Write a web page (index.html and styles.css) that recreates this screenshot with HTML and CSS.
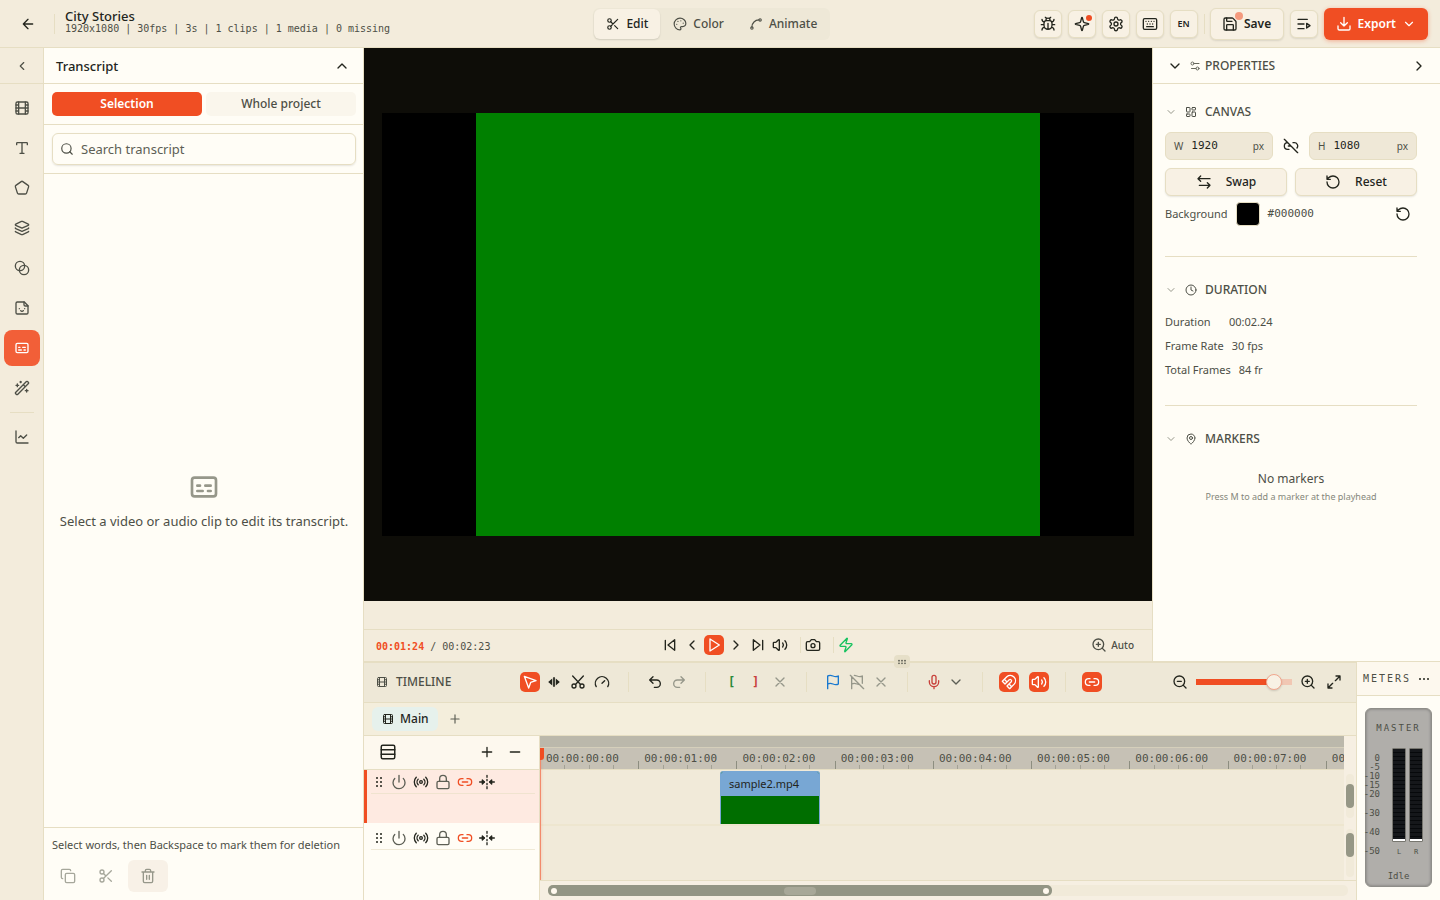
FILE: index.html
```html
<!DOCTYPE html>
<html lang="en">
<head>
<meta charset="utf-8">
<title>City Stories</title>
<link rel="stylesheet" href="styles.css">
</head>
<body>
<svg class="sprite" aria-hidden="true">
  <symbol id="i-back" viewBox="0 0 24 24"><path d="m12 19-7-7 7-7M19 12H5"/></symbol>
  <symbol id="i-left" viewBox="0 0 24 24"><path d="m15 18-6-6 6-6"/></symbol>
  <symbol id="i-right" viewBox="0 0 24 24"><path d="m9 18 6-6-6-6"/></symbol>
  <symbol id="i-up" viewBox="0 0 24 24"><path d="m18 15-6-6-6 6"/></symbol>
  <symbol id="i-down" viewBox="0 0 24 24"><path d="m6 9 6 6 6-6"/></symbol>
  <symbol id="i-film" viewBox="0 0 24 24"><rect width="18" height="18" x="3" y="3" rx="2"/><path d="M7 3v18M3 7.500h4M3 12h18M3 16.500h4M17 3v18M17 7.500h4M17 16.500h4"/></symbol>
  <symbol id="i-type" viewBox="0 0 24 24"><path d="M12 4v16M4 7V5a1 1 0 0 1 1-1h14a1 1 0 0 1 1 1v2M9 20h6"/></symbol>
  <symbol id="i-pentagon" viewBox="0 0 24 24"><path d="M10.830 2.380a2 2 0 0 1 2.340 0l8 5.740a2 2 0 0 1 .73 2.250l-3.040 9.260a2 2 0 0 1-1.900 1.370H7.040a2 2 0 0 1-1.900-1.370L2.100 10.370a2 2 0 0 1 .73-2.250z"/></symbol>
  <symbol id="i-layers" viewBox="0 0 24 24"><path d="M12.830 2.180a2 2 0 0 0-1.660 0L2.600 6.080a1 1 0 0 0 0 1.830l8.580 3.910a2 2 0 0 0 1.660 0l8.580-3.900a1 1 0 0 0 0-1.830z"/><path d="M2 12a1 1 0 0 0 .58.910l8.600 3.910a2 2 0 0 0 1.650 0l8.580-3.900A1 1 0 0 0 22 12"/><path d="M2 17a1 1 0 0 0 .58.910l8.600 3.910a2 2 0 0 0 1.650 0l8.580-3.900A1 1 0 0 0 22 17"/></symbol>
  <symbol id="i-blend" viewBox="0 0 24 24"><circle cx="9" cy="9" r="7"/><circle cx="15" cy="15" r="7"/></symbol>
  <symbol id="i-sticker" viewBox="0 0 24 24"><path d="M15.500 3H5a2 2 0 0 0-2 2v14a2 2 0 0 0 2 2h14a2 2 0 0 0 2-2V8.500z"/><path d="M15 3v4a2 2 0 0 0 2 2h4M8 13h.01M16 13h.01M10 16s.8 1 2 1c1.300 0 2-1 2-1"/></symbol>
  <symbol id="i-captions" viewBox="0 0 24 24"><rect width="18" height="14" x="3" y="5" rx="2"/><path d="M7 15h4M15 15h2M7 11h2M13 11h4"/></symbol>
  <symbol id="i-wand" viewBox="0 0 24 24"><path d="m21.640 3.640-1.280-1.280a1.210 1.210 0 0 0-1.720 0L2.360 18.640a1.210 1.210 0 0 0 0 1.720l1.280 1.280a1.200 1.200 0 0 0 1.720 0L21.640 5.360a1.200 1.200 0 0 0 0-1.720M14 7l3 3M5 6v4M19 14v4M10 2v2M7 8H3M21 16h-4M11 3H9"/></symbol>
  <symbol id="i-chart" viewBox="0 0 24 24"><path d="M3 3v16a2 2 0 0 0 2 2h16"/><path d="m19 9-5 5-4-4-3 3"/></symbol>
  <symbol id="i-scissors" viewBox="0 0 24 24"><circle cx="6" cy="6" r="3"/><path d="M8.120 8.120 12 12M20 4 8.120 15.880"/><circle cx="6" cy="18" r="3"/><path d="M14.800 14.800 20 20"/></symbol>
  <symbol id="i-cut" viewBox="0 0 24 24"><circle cx="6" cy="18" r="3"/><circle cx="18" cy="18" r="3"/><path d="M8.200 15.800 20 3M15.800 15.800 4 3"/></symbol>
  <symbol id="i-palette" viewBox="0 0 24 24"><path d="M12 2C6.500 2 2 6.500 2 12s4.500 10 10 10c.93 0 1.650-.75 1.650-1.690 0-.44-.18-.83-.44-1.120-.29-.29-.44-.65-.44-1.130a1.640 1.640 0 0 1 1.670-1.670h2c3.050 0 5.550-2.500 5.550-5.550C21.970 6.010 17.460 2 12 2z"/><path d="M13.500 6.500h.01M17.500 10.500h.01M6.500 12.500h.01M8.500 7.500h.01"/></symbol>
  <symbol id="i-spline" viewBox="0 0 24 24"><circle cx="19" cy="5" r="2"/><circle cx="5" cy="19" r="2"/><path d="M5 17A12 12 0 0 1 17 5"/></symbol>
  <symbol id="i-bug" viewBox="0 0 24 24"><path d="m8 2 1.880 1.880M14.120 3.880 16 2M9 7.130v-1a3 3 0 1 1 6 0v1M12 20c-3.300 0-6-2.700-6-6v-3a4 4 0 0 1 4-4h4a4 4 0 0 1 4 4v3c0 3.300-2.700 6-6 6M12 20v-9M6.530 9C4.600 8.800 3 7.100 3 5M6 13H2M3 21c0-2.100 1.700-3.900 3.800-4M21 5c0 2.100-1.600 3.800-3.500 4M22 13h-4M17.200 17c2.100.1 3.800 1.900 3.800 4"/></symbol>
  <symbol id="i-spark" viewBox="0 0 24 24"><path d="M9.940 15.500A2 2 0 0 0 8.500 14.060l-6.140-1.580a.5.500 0 0 1 0-.96L8.500 9.940A2 2 0 0 0 9.940 8.500l1.580-6.140a.5.500 0 0 1 .96 0L14.060 8.500A2 2 0 0 0 15.500 9.940l6.140 1.580a.5.500 0 0 1 0 .96L15.500 14.060a2 2 0 0 0-1.440 1.440l-1.580 6.140a.5.500 0 0 1-.96 0z"/></symbol>
  <symbol id="i-gear" viewBox="0 0 24 24"><path d="M9.700 4.100a2.300 2.300 0 0 1 4.600 0 2.300 2.300 0 0 0 3.300 1.900 2.300 2.300 0 0 1 2.300 4 2.300 2.300 0 0 0 0 3.900 2.300 2.300 0 0 1-2.300 4 2.300 2.300 0 0 0-3.300 1.900 2.300 2.300 0 0 1-4.600 0 2.300 2.300 0 0 0-3.300-1.900 2.300 2.300 0 0 1-2.300-4 2.300 2.300 0 0 0 0-3.900 2.300 2.300 0 0 1 2.300-4 2.300 2.300 0 0 0 3.300-1.900"/><circle cx="12" cy="12" r="3"/></symbol>
  <symbol id="i-keyboard" viewBox="0 0 24 24"><rect width="20" height="16" x="2" y="4" rx="2"/><path d="M6 8h.01M10 8h.01M14 8h.01M18 8h.01M8 12h.01M12 12h.01M16 12h.01M7 16h10"/></symbol>
  <symbol id="i-save" viewBox="0 0 24 24"><path d="M15.200 3a2 2 0 0 1 1.400.6l3.800 3.800a2 2 0 0 1 .6 1.400V19a2 2 0 0 1-2 2H5a2 2 0 0 1-2-2V5a2 2 0 0 1 2-2z"/><path d="M17 21v-7a1 1 0 0 0-1-1H8a1 1 0 0 0-1 1v7M7 3v4a1 1 0 0 0 1 1h7"/></symbol>
  <symbol id="i-queue" viewBox="0 0 24 24"><path d="M3 5h14M3 12h9M3 19h9"/><path d="m16 11 5 3.500-5 3.500z"/></symbol>
  <symbol id="i-download" viewBox="0 0 24 24"><path d="M12 2v13M21 15v4a2 2 0 0 1-2 2H5a2 2 0 0 1-2-2v-4M7 10l5 5 5-5"/></symbol>
  <symbol id="i-search" viewBox="0 0 24 24"><circle cx="11" cy="11" r="8"/><path d="m21 21-4.300-4.300"/></symbol>
  <symbol id="i-zin" viewBox="0 0 24 24"><circle cx="11" cy="11" r="8"/><path d="m21 21-4.300-4.300M11 8v6M8 11h6"/></symbol>
  <symbol id="i-zout" viewBox="0 0 24 24"><circle cx="11" cy="11" r="8"/><path d="m21 21-4.300-4.300M8 11h6"/></symbol>
  <symbol id="i-copy" viewBox="0 0 24 24"><rect width="14" height="14" x="8" y="8" rx="2"/><path d="M4 16c-1.100 0-2-.9-2-2V4c0-1.100.9-2 2-2h10c1.100 0 2 .9 2 2"/></symbol>
  <symbol id="i-trash" viewBox="0 0 24 24"><path d="M3 6h18M19 6v14a2 2 0 0 1-2 2H7a2 2 0 0 1-2-2V6M8 6V4a2 2 0 0 1 2-2h4a2 2 0 0 1 2 2v2M10 11v6M14 11v6"/></symbol>
  <symbol id="i-sliders" viewBox="0 0 24 24"><path d="M20 7h-9M14 17H5"/><circle cx="17" cy="17" r="3"/><circle cx="7" cy="7" r="3"/></symbol>
  <symbol id="i-layout" viewBox="0 0 24 24"><rect x="3" y="3" width="7" height="9" rx="1"/><rect x="14" y="3" width="7" height="5" rx="1"/><rect x="14" y="12" width="7" height="9" rx="1"/><rect x="3" y="16" width="7" height="5" rx="1"/></symbol>
  <symbol id="i-unlink" viewBox="0 0 24 24"><path d="M9 17H7A5 5 0 0 1 7 7M15 7h2a5 5 0 0 1 4 8M8 12h4M2 2l20 20"/></symbol>
  <symbol id="i-link" viewBox="0 0 24 24"><path d="M9 17H7A5 5 0 0 1 7 7h2M15 7h2a5 5 0 1 1 0 10h-2M8 12h8"/></symbol>
  <symbol id="i-swap" viewBox="0 0 24 24"><path d="M7 3 3 7l4 4M3 7h18M17 13l4 4-4 4M21 17H5"/></symbol>
  <symbol id="i-reset" viewBox="0 0 24 24"><path d="M3 12a9 9 0 1 0 9-9 9.750 9.750 0 0 0-6.740 2.740L3 8M3 3v5h5"/></symbol>
  <symbol id="i-clock" viewBox="0 0 24 24"><circle cx="12" cy="12" r="10"/><path d="M12 6v6l4 2"/></symbol>
  <symbol id="i-pin" viewBox="0 0 24 24"><path d="M20 10c0 5-5.500 10.200-7.400 11.800a1 1 0 0 1-1.200 0C9.500 20.200 4 15 4 10a8 8 0 0 1 16 0"/><circle cx="12" cy="10" r="3"/></symbol>
  <symbol id="i-start" viewBox="0 0 24 24"><path d="M19 20 9 12l10-8zM5 19V5"/></symbol>
  <symbol id="i-end" viewBox="0 0 24 24"><path d="m5 4 10 8-10 8zM19 5v14"/></symbol>
  <symbol id="i-play" viewBox="0 0 24 24"><path d="M6 3l14 9-14 9z"/></symbol>
  <symbol id="i-volume" viewBox="0 0 24 24"><path d="M11 4.700a.7.700 0 0 0-1.200-.5L6.400 7.600A1.400 1.400 0 0 1 5.400 8H3a1 1 0 0 0-1 1v6a1 1 0 0 0 1 1h2.400a1.400 1.400 0 0 1 1 .4l3.400 3.400a.7.700 0 0 0 1.200-.5zM16 9a5 5 0 0 1 0 6M19.400 18.400a9 9 0 0 0 0-12.800"/></symbol>
  <symbol id="i-camera" viewBox="0 0 24 24"><path d="M14.500 4h-5L7 7H4a2 2 0 0 0-2 2v9a2 2 0 0 0 2 2h16a2 2 0 0 0 2-2V9a2 2 0 0 0-2-2h-3z"/><circle cx="12" cy="13" r="3"/></symbol>
  <symbol id="i-bolt" viewBox="0 0 24 24"><path d="M4 14a1 1 0 0 1-.8-1.600l9.900-10.200a.5.500 0 0 1 .9.500l-2 6A1 1 0 0 0 13 10h7a1 1 0 0 1 .8 1.600l-9.900 10.200a.5.500 0 0 1-.9-.5l2-6A1 1 0 0 0 11 14z"/></symbol>
  <symbol id="i-pointer" viewBox="0 0 24 24"><path d="M3.500 3.500 21 10l-8 2.700L10 21z"/></symbol>
  <symbol id="i-trim" viewBox="0 0 24 24"><path d="M12 5v14" stroke-width="3"/><path fill="currentColor" stroke="none" d="M9 6v12l-7-6zM15 6v12l7-6z"/></symbol>
  <symbol id="i-gauge" viewBox="0 0 24 24"><path d="m12 14 4-4M3.340 19a10 10 0 1 1 17.320 0"/></symbol>
  <symbol id="i-undo" viewBox="0 0 24 24"><path d="M9 14 4 9l5-5M4 9h10.500a5.500 5.500 0 0 1 0 11H11"/></symbol>
  <symbol id="i-redo" viewBox="0 0 24 24"><path d="m15 14 5-5-5-5M20 9H9.500a5.500 5.500 0 0 0 0 11H13"/></symbol>
  <symbol id="i-x" viewBox="0 0 24 24"><path d="M18 6 6 18M6 6l12 12"/></symbol>
  <symbol id="i-flag" viewBox="0 0 24 24"><path d="M4 15s1-1 4-1 5 2 8 2 4-1 4-1V3s-1 1-4 1-5-2-8-2-4 1-4 1zM4 22v-7"/></symbol>
  <symbol id="i-flagoff" viewBox="0 0 24 24"><path d="M8 2c3 0 5 2 8 2s4-1 4-1v11M4 22V4M4 15s1-1 4-1 5 2 8 2M2 2l20 20"/></symbol>
  <symbol id="i-mic" viewBox="0 0 24 24"><path d="M12 2a3 3 0 0 0-3 3v7a3 3 0 0 0 6 0V5a3 3 0 0 0-3-3M19 10v2a7 7 0 0 1-14 0v-2M12 19v3"/></symbol>
  <symbol id="i-magnet" viewBox="0 0 24 24"><path d="m6 15-4-4 6.750-6.770a7.790 7.790 0 0 1 11 11L13 22l-4-4 6.390-6.360a2.140 2.140 0 0 0-3-3L6 15M5 8l4 4M12 15l4 4"/></symbol>
  <symbol id="i-expand" viewBox="0 0 24 24"><path d="M15 3h6v6M21 3l-7 7M3 21l7-7M9 21H3v-6"/></symbol>
  <symbol id="i-plus" viewBox="0 0 24 24"><path d="M5 12h14M12 5v14"/></symbol>
  <symbol id="i-minus" viewBox="0 0 24 24"><path d="M5 12h14"/></symbol>
  <symbol id="i-rows" viewBox="0 0 24 24"><rect width="18" height="18" x="3" y="3" rx="2"/><path d="M3 9h18M3 15h18"/></symbol>
  <symbol id="i-grip" viewBox="0 0 24 24"><path stroke-width="4" d="M8 4h.01M8 12h.01M8 20h.01M16 4h.01M16 12h.01M16 20h.01"/></symbol>
  <symbol id="i-griph" viewBox="0 0 24 24"><path stroke-width="5" d="M3 8h.01M12 8h.01M21 8h.01M3 16h.01M12 16h.01M21 16h.01"/></symbol>
  <symbol id="i-power" viewBox="0 0 24 24"><path d="M12 2v10M18.400 6.600a9 9 0 1 1-12.770.04"/></symbol>
  <symbol id="i-radio" viewBox="0 0 24 24"><path d="M4.900 19.100C1 15.200 1 8.800 4.900 4.900M7.800 16.200c-2.300-2.300-2.300-6.100 0-8.500M16.200 7.800c2.300 2.300 2.300 6.100 0 8.500M19.100 4.900C23 8.800 23 15.100 19.100 19"/><circle cx="12" cy="12" r="2"/></symbol>
  <symbol id="i-lock" viewBox="0 0 24 24"><rect width="18" height="11" x="3" y="11" rx="2"/><path d="M7 11V7a5 5 0 0 1 10 0v4"/></symbol>
  <symbol id="i-fold" viewBox="0 0 24 24"><path d="M12 2v3M12 8v2M12 14v2M12 19v3M1 12h7M23 12h-7"/><path fill="currentColor" d="m5 9 3 3-3 3zM19 9l-3 3 3 3z"/></symbol>
  <symbol id="i-dots" viewBox="0 0 24 24"><path stroke-width="4" d="M4 12h.01M12 12h.01M20 12h.01"/></symbol>
</svg>

<div class="app">
  <header class="topbar">
    <div class="topbar-left">
      <button class="icon-btn back" aria-label="Back"><svg class="s16"><use href="#i-back"/></svg></button>
      <span class="vsep tall"></span>
      <div class="project">
        <h1>City Stories</h1>
        <p>1920x1080 | 30fps | 3s | 1 clips | 1 media | 0 missing</p>
      </div>
    </div>
    <nav class="modes">
      <button class="mode active"><svg class="s14"><use href="#i-scissors"/></svg>Edit</button>
      <button class="mode"><svg class="s14"><use href="#i-palette"/></svg>Color</button>
      <button class="mode"><svg class="s14"><use href="#i-spline"/></svg>Animate</button>
    </nav>
    <div class="topbar-right">
      <button class="tool" aria-label="Report a bug"><svg class="s16"><use href="#i-bug"/></svg></button>
      <button class="tool" aria-label="Assistant"><svg class="s16"><use href="#i-spark"/></svg><span class="dot"></span></button>
      <button class="tool" aria-label="Settings"><svg class="s16"><use href="#i-gear"/></svg></button>
      <button class="tool" aria-label="Shortcuts"><svg class="s16"><use href="#i-keyboard"/></svg></button>
      <button class="tool lang">EN</button>
      <span class="vsep tall"></span>
      <button class="tool save"><svg class="s16"><use href="#i-save"/></svg>Save<span class="dot soft"></span></button>
      <button class="tool" aria-label="Render queue"><svg class="s16"><use href="#i-queue"/></svg></button>
      <button class="export"><svg class="s16"><use href="#i-download"/></svg>Export<svg class="s14"><use href="#i-down"/></svg></button>
    </div>
  </header>

  <aside class="rail">
    <button class="rail-toggle" aria-label="Collapse"><svg class="s14"><use href="#i-left"/></svg></button>
    <div class="rail-items">
      <button class="rail-btn" aria-label="Media"><svg class="s16"><use href="#i-film"/></svg></button>
      <button class="rail-btn" aria-label="Text"><svg class="s16"><use href="#i-type"/></svg></button>
      <button class="rail-btn" aria-label="Shapes"><svg class="s16"><use href="#i-pentagon"/></svg></button>
      <button class="rail-btn" aria-label="Layers"><svg class="s16"><use href="#i-layers"/></svg></button>
      <button class="rail-btn" aria-label="Transitions"><svg class="s16"><use href="#i-blend"/></svg></button>
      <button class="rail-btn" aria-label="Stickers"><svg class="s16"><use href="#i-sticker"/></svg></button>
      <button class="rail-btn active" aria-label="Transcript"><svg class="s16"><use href="#i-captions"/></svg></button>
      <button class="rail-btn" aria-label="AI tools"><svg class="s16"><use href="#i-wand"/></svg></button>
      <span class="rail-sep"></span>
      <button class="rail-btn" aria-label="Graphs"><svg class="s16"><use href="#i-chart"/></svg></button>
    </div>
  </aside>

  <section class="transcript">
    <div class="panel-head"><h2>Transcript</h2><button class="icon-btn" aria-label="Collapse panel"><svg class="s16"><use href="#i-up"/></svg></button></div>
    <div class="scope">
      <button class="scope-btn active">Selection</button>
      <button class="scope-btn">Whole project</button>
    </div>
    <div class="search-row">
      <label class="search"><svg class="s14"><use href="#i-search"/></svg><input type="text" placeholder="Search transcript" aria-label="Search transcript"></label>
    </div>
    <div class="empty"><svg class="s32"><use href="#i-captions"/></svg><p>Select a video or audio clip to edit its transcript.</p></div>
    <div class="transcript-foot">
      <p>Select words, then Backspace to mark them for deletion</p>
      <div class="foot-btns">
        <button class="foot-btn" aria-label="Copy"><svg class="s16"><use href="#i-copy"/></svg></button>
        <button class="foot-btn" aria-label="Cut"><svg class="s16"><use href="#i-scissors"/></svg></button>
        <button class="foot-btn wide" aria-label="Delete"><svg class="s16"><use href="#i-trash"/></svg></button>
      </div>
    </div>
  </section>

  <main class="work">
    <div class="upper">
      <section class="viewer">
        <div class="stage-wrap"><div class="stage"><div class="frame"></div></div></div>
        <div class="strip"></div>
        <div class="transport">
          <p class="time"><b>00:01:24</b> / 00:02:23</p>
          <div class="transport-btns">
            <button class="icon-btn" aria-label="Go to start"><svg class="s16"><use href="#i-start"/></svg></button>
            <button class="icon-btn" aria-label="Previous frame"><svg class="s16"><use href="#i-left"/></svg></button>
            <button class="icon-btn on" aria-label="Play"><svg class="s16"><use href="#i-play"/></svg></button>
            <button class="icon-btn" aria-label="Next frame"><svg class="s16"><use href="#i-right"/></svg></button>
            <button class="icon-btn" aria-label="Go to end"><svg class="s16"><use href="#i-end"/></svg></button>
            <button class="icon-btn" aria-label="Volume"><svg class="s16"><use href="#i-volume"/></svg></button>
            <span class="vsep"></span>
            <button class="icon-btn" aria-label="Snapshot"><svg class="s16"><use href="#i-camera"/></svg></button>
            <span class="vsep"></span>
            <button class="icon-btn green" aria-label="Fast preview"><svg class="s16"><use href="#i-bolt"/></svg></button>
          </div>
          <button class="zoom-auto"><svg class="s16"><use href="#i-zin"/></svg>Auto</button>
        </div>
      </section>

      <aside class="props">
        <div class="panel-head props-head">
          <button class="icon-btn" aria-label="Collapse properties"><svg class="s16"><use href="#i-down"/></svg></button>
          <svg class="s12 muted"><use href="#i-sliders"/></svg>
          <h2>PROPERTIES</h2>
          <button class="icon-btn push" aria-label="Hide properties"><svg class="s16"><use href="#i-right"/></svg></button>
        </div>
        <div class="props-body">
          <section class="group">
            <h3><svg class="s12 faint"><use href="#i-down"/></svg><svg class="s12"><use href="#i-layout"/></svg>CANVAS</h3>
            <div class="size-row">
              <label class="field"><span>W</span><input type="text" value="1920"><em>px</em></label>
              <button class="icon-btn" aria-label="Unlink ratio"><svg class="s16"><use href="#i-unlink"/></svg></button>
              <label class="field"><span>H</span><input type="text" value="1080"><em>px</em></label>
            </div>
            <div class="pair">
              <button class="tool action"><svg class="s16"><use href="#i-swap"/></svg>Swap</button>
              <button class="tool action"><svg class="s16"><use href="#i-reset"/></svg>Reset</button>
            </div>
            <div class="bg-row">
              <span>Background</span>
              <button class="swatch" aria-label="Background colour"></button>
              <code>#000000</code>
              <button class="icon-btn push" aria-label="Reset background"><svg class="s16"><use href="#i-reset"/></svg></button>
            </div>
          </section>
          <section class="group">
            <h3><svg class="s12 faint"><use href="#i-down"/></svg><svg class="s12"><use href="#i-clock"/></svg>DURATION</h3>
            <dl>
              <div><dt class="dur">Duration</dt><dd>00:02.24</dd></div>
              <div><dt>Frame Rate</dt><dd>30 fps</dd></div>
              <div><dt>Total Frames</dt><dd>84 fr</dd></div>
            </dl>
          </section>
          <section class="group">
            <h3><svg class="s12 faint"><use href="#i-down"/></svg><svg class="s12"><use href="#i-pin"/></svg>MARKERS</h3>
            <div class="no-markers"><p>No markers</p><small>Press M to add a marker at the playhead</small></div>
          </section>
        </div>
      </aside>
    </div>

    <div class="lower">
      <span class="resize"><svg class="s8"><use href="#i-griph"/></svg></span>
      <section class="timeline">
        <div class="tl-bar">
          <h2><svg class="s12"><use href="#i-film"/></svg>TIMELINE</h2>
          <div class="tl-tools">
            <button class="icon-btn on" aria-label="Select"><svg class="s16"><use href="#i-pointer"/></svg></button>
            <button class="icon-btn" aria-label="Trim"><svg class="s14"><use href="#i-trim"/></svg></button>
            <button class="icon-btn" aria-label="Razor"><svg class="s16"><use href="#i-cut"/></svg></button>
            <button class="icon-btn" aria-label="Speed"><svg class="s16"><use href="#i-gauge"/></svg></button>
            <span class="vsep"></span>
            <button class="icon-btn" aria-label="Undo"><svg class="s16"><use href="#i-undo"/></svg></button>
            <button class="icon-btn dim" aria-label="Redo"><svg class="s16"><use href="#i-redo"/></svg></button>
            <span class="vsep"></span>
            <button class="icon-btn mark-in" aria-label="Mark in">[</button>
            <button class="icon-btn mark-out" aria-label="Mark out">]</button>
            <button class="icon-btn dim" aria-label="Clear marks"><svg class="s16"><use href="#i-x"/></svg></button>
            <span class="vsep"></span>
            <button class="icon-btn blue" aria-label="Add marker"><svg class="s16"><use href="#i-flag"/></svg></button>
            <button class="icon-btn dim" aria-label="Remove marker"><svg class="s16"><use href="#i-flagoff"/></svg></button>
            <button class="icon-btn dim" aria-label="Clear markers"><svg class="s16"><use href="#i-x"/></svg></button>
            <span class="vsep"></span>
            <span class="split"><button class="icon-btn red" aria-label="Record"><svg class="s16"><use href="#i-mic"/></svg></button><button class="icon-btn muted" aria-label="Record options"><svg class="s16"><use href="#i-down"/></svg></button></span>
            <span class="vsep"></span>
            <span class="snaps"><button class="icon-btn on" aria-label="Snap"><svg class="s16"><use href="#i-magnet"/></svg></button><button class="icon-btn on" aria-label="Scrub audio"><svg class="s16"><use href="#i-volume"/></svg></button></span>
            <span class="vsep"></span>
            <button class="icon-btn on" aria-label="Link clips"><svg class="s16"><use href="#i-link"/></svg></button>
          </div>
          <div class="tl-zoom">
            <button class="icon-btn" aria-label="Zoom out"><svg class="s16"><use href="#i-zout"/></svg></button>
            <input type="range" min="0" max="100" value="88" aria-label="Timeline zoom">
            <button class="icon-btn" aria-label="Zoom in"><svg class="s16"><use href="#i-zin"/></svg></button>
            <button class="icon-btn" aria-label="Fit"><svg class="s16"><use href="#i-expand"/></svg></button>
          </div>
        </div>
        <div class="tl-tabs">
          <button class="tl-tab"><svg class="s12"><use href="#i-film"/></svg>Main</button>
          <button class="icon-btn muted" aria-label="Add sequence"><svg class="s14"><use href="#i-plus"/></svg></button>
        </div>
        <div class="tl-body">
          <div class="heads">
            <div class="heads-bar">
              <button class="icon-btn" aria-label="Track list"><svg class="s18"><use href="#i-rows"/></svg></button>
              <button class="icon-btn push" aria-label="Add track"><svg class="s16"><use href="#i-plus"/></svg></button>
              <button class="icon-btn" aria-label="Remove track"><svg class="s16"><use href="#i-minus"/></svg></button>
            </div>
            <div class="track-head selected">
              <div class="track-btns">
                <button class="icon-btn grip" aria-label="Move"><svg class="s12"><use href="#i-grip"/></svg></button>
                <button class="icon-btn muted" aria-label="Enable"><svg class="s16"><use href="#i-power"/></svg></button>
                <button class="icon-btn" aria-label="Solo"><svg class="s16"><use href="#i-radio"/></svg></button>
                <button class="icon-btn muted" aria-label="Lock"><svg class="s16"><use href="#i-lock"/></svg></button>
                <button class="icon-btn orange" aria-label="Link"><svg class="s16"><use href="#i-link"/></svg></button>
                <button class="icon-btn" aria-label="Ripple"><svg class="s16"><use href="#i-fold"/></svg></button>
              </div>
            </div>
            <div class="track-head">
              <div class="track-btns">
                <button class="icon-btn grip" aria-label="Move"><svg class="s12"><use href="#i-grip"/></svg></button>
                <button class="icon-btn muted" aria-label="Enable"><svg class="s16"><use href="#i-power"/></svg></button>
                <button class="icon-btn" aria-label="Solo"><svg class="s16"><use href="#i-radio"/></svg></button>
                <button class="icon-btn muted" aria-label="Lock"><svg class="s16"><use href="#i-lock"/></svg></button>
                <button class="icon-btn orange" aria-label="Link"><svg class="s16"><use href="#i-link"/></svg></button>
                <button class="icon-btn" aria-label="Ripple"><svg class="s16"><use href="#i-fold"/></svg></button>
              </div>
            </div>
          </div>
          <div class="lanes">
            <div class="lanes-row">
              <div class="lanes-main">
                <div class="cache"></div>
                <div class="ruler">
                  <div class="ticks">
                    <span>00:00:00:00</span><span>00:00:01:00</span><span>00:00:02:00</span><span>00:00:03:00</span><span>00:00:04:00</span><span>00:00:05:00</span><span>00:00:06:00</span><span>00:00:07:00</span><span>00:00:08:00</span>
                  </div>
                </div>
                <div class="lane"><div class="clip"><span>sample2.mp4</span></div></div>
                <div class="lane last"></div>
                <div class="playhead"></div>
              </div>
              <div class="vscroll"><div class="vtrack"><span></span></div><div class="vtrack"><span></span></div></div>
            </div>
            <div class="hscroll"><div class="htrack"><div class="hthumb"><i></i><b></b><i></i></div></div></div>
          </div>
        </div>
      </section>

      <aside class="meters">
        <div class="meters-head"><h2>METERS</h2><button class="icon-btn" aria-label="Meter options"><svg class="s12"><use href="#i-dots"/></svg></button></div>
        <div class="unit">
          <h3>MASTER</h3>
          <div class="unit-body">
            <ul class="scale"><li>0</li><li>-5</li><li>-10</li><li>-15</li><li>-20</li><li class="gap">-30</li><li class="gap">-40</li><li class="gap">-50</li></ul>
            <div class="bar"><i></i><span>L</span></div>
            <div class="bar"><i></i><span>R</span></div>
          </div>
          <p>Idle</p>
        </div>
      </aside>
    </div>
  </main>
</div>
</body>
</html>
```
FILE: styles.css
```css
:root {
  --cream: #f3ecdc;
  --paper: #fffdf6;
  --bar: #eee8d7;
  --line: #e6dec3;
  --ink: #23251d;
  --mid: #4d4f46;
  --accent: #f04e23;
  --mono: "DejaVu Sans Mono", "Liberation Mono", monospace;
}
* { box-sizing: border-box; margin: 0; padding: 0; }
body { font: 12px/16px "Noto Sans", "Open Sans", sans-serif; color: var(--mid); background: var(--cream); }
button, input { font: inherit; color: inherit; background: none; border: 0; }
h1, h2, h3 { font-weight: 500; }
.sprite { position: absolute; width: 0; height: 0; }
svg { fill: none; stroke: currentColor; stroke-width: 2; stroke-linecap: round; stroke-linejoin: round; flex: none; display: block; }
.s8 { width: 8px; height: 8px; }
.s12 { width: 12px; height: 12px; }
.s14 { width: 14px; height: 14px; }
.s16 { width: 16px; height: 16px; }
.s18 { width: 18px; height: 18px; }
.s32 { width: 32px; height: 32px; }
.muted { color: #66685d; }
.faint { color: #96978a; }
.icon-btn { width: 20px; height: 20px; flex: none; display: flex; align-items: center; justify-content: center; color: var(--ink); border-radius: 5px; }
.icon-btn.on { background: var(--accent); color: #fff; }
.icon-btn.dim { color: #96978a; }
.icon-btn.muted { color: #5d5f55; }
.icon-btn.green { color: #16c25f; }
.icon-btn.blue { color: #1878cf; }
.icon-btn.red { color: #c8413b; }
.icon-btn.orange { color: var(--accent); }
.push { margin-left: auto; }
.vsep { width: 1px; height: 16px; background: var(--line); flex: none; }
.vsep.tall { height: 20px; }

.app { display: grid; grid-template: 48px minmax(0, 1fr) / 44px 320px minmax(0, 1fr); height: 100vh; }

/* Top bar */
.topbar { grid-column: 1 / -1; display: flex; align-items: center; justify-content: space-between; padding: 0 12px; border-bottom: 1px solid var(--line); }
.topbar-left { display: flex; align-items: center; gap: 10px; }
.back { width: 32px; height: 32px; }
.project { padding-bottom: 4px; }
.project h1 { font-size: 13px; line-height: 14px; color: var(--ink); }
.project p { font: 10px/11px var(--mono); }
.modes { display: flex; gap: 1px; padding: 1px; border-radius: 6px; background: var(--bar); }
.mode { display: flex; align-items: center; gap: 6px; height: 30px; padding: 0 12px; border-radius: 6px; font-weight: 500; }
.mode.active { color: var(--ink); background: #f8f1e4; box-shadow: 0 1px 2px #0000001f; }
.topbar-right { display: flex; align-items: center; justify-content: flex-end; gap: 6px; }
.topbar-right .vsep { margin: 0 -1px 0 0; }
.tool { position: relative; width: 28px; height: 28px; display: flex; align-items: center; justify-content: center; border: 1px solid var(--line); border-radius: 6px; background: #f8f1e4; color: var(--ink); font-weight: 600; box-shadow: 0 1px 2px #0000001a; }
.tool.lang { font-size: 9px; }
.tool.save { width: 74px; height: 32px; gap: 6px; }
.dot { position: absolute; top: 4px; right: 3px; width: 6px; height: 6px; border-radius: 50%; background: var(--accent); }
.dot.soft { top: 3px; left: 24px; width: 8px; height: 8px; background: #f49a7e; }
.export { display: flex; align-items: center; gap: 6px; height: 32px; padding: 0 12px; border-radius: 6px; background: var(--accent); color: #fff; font-weight: 600; box-shadow: 0 1px 4px #f04e2366; }

/* Tool rail */
.rail { border-right: 1px solid var(--line); }
.rail-toggle { width: 100%; height: 36px; display: flex; align-items: center; justify-content: center; border-bottom: 1px solid var(--line); }
.rail-items { display: flex; flex-direction: column; align-items: center; gap: 4px; padding-top: 6px; }
.rail-btn { width: 36px; height: 36px; display: flex; align-items: center; justify-content: center; border-radius: 8px; }
.rail-btn.active { background: #f25f38; color: #fff; }
.rail-sep { width: 24px; height: 1px; margin: 2px 0; background: var(--line); }

/* Transcript panel */
.transcript { display: flex; flex-direction: column; background: var(--paper); box-shadow: inset -1px 0 var(--line); }
.panel-head { display: flex; align-items: center; height: 36px; padding: 0 12px; border-bottom: 1px solid var(--line); flex: none; }
.transcript .panel-head { justify-content: space-between; }
.transcript h2 { font-size: 13px; color: var(--ink); }
.scope { display: grid; grid-template-columns: 1fr 1fr; gap: 4px; padding: 8px; border-bottom: 1px solid var(--line); }
.scope-btn { height: 24px; border-radius: 5px; background: #faf6ec; font-weight: 500; }
.scope-btn.active { background: var(--accent); color: #fff; font-weight: 600; }
.search-row { padding: 8px; border-bottom: 1px solid var(--line); }
.search { display: flex; align-items: center; gap: 7px; height: 32px; padding: 0 7px; border: 1px solid var(--line); border-radius: 6px; box-shadow: 0 1px 2px #0000001a; }
.search input { flex: 1; min-width: 0; font-size: 13px; outline: 0; }
.search input::placeholder { color: #5d5f55; opacity: 1; }
.empty { flex: 1; display: flex; flex-direction: column; align-items: center; justify-content: center; gap: 8px; font-size: 13px; line-height: 20px; white-space: nowrap; }
.empty svg { color: #96978a; }
.transcript-foot { display: flex; flex-direction: column; gap: 7px; padding: 9px 8px 8px; border-top: 1px solid var(--line); font-size: 11px; white-space: nowrap; }
.foot-btns { display: flex; gap: 6px; }
.foot-btn { width: 32px; height: 32px; display: flex; align-items: center; justify-content: center; border-radius: 6px; color: #a6a79b; }
.foot-btn.wide { width: 40px; background: #f8f1e7; color: #96978a; }

/* Viewer */
.work { display: flex; flex-direction: column; min-width: 0; }
.upper { flex: 1; min-height: 0; display: grid; grid-template-columns: minmax(0, 1fr) 288px; }
.viewer { display: flex; flex-direction: column; min-height: 0; }
.stage-wrap { flex: 1; min-height: 0; display: flex; align-items: center; justify-content: center; padding: 0 18px; background: #0e0d08; }
.stage { width: 100%; aspect-ratio: 16 / 9; display: flex; justify-content: center; background: #000; }
.frame { height: 100%; aspect-ratio: 4 / 3; background: #008000; }
.strip { height: 28px; flex: none; }
.transport { flex: none; height: 32px; display: grid; grid-template-columns: 1fr auto 1fr; align-items: center; padding: 0 12px 1px; border-top: 1px solid var(--line); }
.time { font: 10px/16px var(--mono); padding-top: 4px; }
.time b { color: var(--accent); }
.transport-btns { display: flex; align-items: center; gap: 2px; }
.transport-btns .vsep { margin-left: 8px; }
.zoom-auto { justify-self: end; display: flex; align-items: center; gap: 4px; padding-right: 6px; font-size: 10px; font-weight: 500; }

/* Properties */
.props { background: var(--paper); border-left: 1px solid var(--line); }
.props-head { gap: 4px; padding-right: 11px; }
.props-head h2 { font-size: 12px; }
.props-body { padding: 0 23px 0 12px; }
.group { padding-top: 20px; }
.group + .group { border-top: 1px solid var(--line); padding-top: 25px; }
.group h3 { display: flex; align-items: center; gap: 8px; height: 16px; font-size: 12px; }
.size-row { display: grid; grid-template-columns: 1fr 20px 1fr; gap: 8px; align-items: center; margin-top: 12px; }
.field { display: flex; align-items: center; gap: 8px; height: 28px; padding: 0 8px; border: 1px solid var(--line); border-radius: 6px; background: #efe8d7; font-size: 10px; }
.field input { flex: 1; width: 0; font: 11px/16px var(--mono); color: var(--ink); }
.field em { font-style: normal; }
.pair { display: grid; grid-template-columns: 1fr 1fr; gap: 8px; margin-top: 8px; }
.action { width: auto; gap: 14px; font-weight: 500; }
.bg-row { display: flex; align-items: center; gap: 8px; height: 24px; margin: 6px 0 30px; padding-right: 4px; font-size: 11px; }
.swatch { width: 24px; height: 24px; border: 1px solid var(--line); border-radius: 4px; background: #000; }
.bg-row code { font: 11px/16px var(--mono); }
.group dl { margin: 12px 0 23px; font-size: 11px; }
.group dl div { display: flex; gap: 8px; height: 24px; line-height: 24px; }
.dur { min-width: 56px; }
.no-markers { display: flex; flex-direction: column; align-items: center; margin-top: 24px; }
.no-markers small { margin-top: 2px; font-size: 9px; color: #85877b; }

/* Timeline */
.lower { position: relative; flex: none; height: 239px; display: grid; grid-template-columns: minmax(0, 1fr) 84px; border-top: 1px solid var(--line); }
.resize { position: absolute; z-index: 2; top: -7px; left: 50%; transform: translateX(-50%); width: 16px; height: 13px; display: flex; align-items: center; justify-content: center; border-radius: 4px; background: #e6dfc8; }
.timeline { display: flex; flex-direction: column; min-width: 0; border-top: 1px solid var(--line); }
.tl-bar { flex: none; height: 40px; display: flex; align-items: center; justify-content: space-between; padding: 0 12px 1px; background: var(--bar); border-bottom: 1px solid var(--line); }
.tl-bar h2 { display: flex; align-items: center; gap: 8px; font-size: 12px; }
.tl-tools { display: flex; align-items: center; gap: 4px; }
.tl-tools .vsep { height: 20px; margin: 0 12px; }
.split { display: flex; gap: 2px; }
.snaps { display: flex; gap: 10px; }
.icon-btn.mark-in, .icon-btn.mark-out { font: bold 12px/16px var(--mono); }
.icon-btn.mark-in { color: #2c8a3c; }
.icon-btn.mark-out { color: #c8413b; }
.tl-zoom { display: flex; align-items: center; gap: 6px; }
.tl-zoom input { width: 96px; height: 16px; appearance: none; border-radius: 3px; background: linear-gradient(90deg, var(--accent) 80%, #f1c7b3 80%) center / 100% 6px no-repeat; }
.tl-zoom input::-webkit-slider-thumb { appearance: none; width: 16px; height: 16px; border: 1px solid #f2a78e; border-radius: 50%; background: #f8f1e4; box-shadow: 0 1px 2px #00000026; }
.tl-tabs { flex: none; height: 33px; display: flex; align-items: center; gap: 7px; padding: 0 8px; background: #f4eedc; border-bottom: 1px solid var(--line); }
.tl-tab { display: flex; align-items: center; gap: 6px; height: 24px; padding: 0 9px 0 10px; border-radius: 6px; background: #e6f1ec; color: var(--ink); font-weight: 500; }
.tl-body { flex: 1; min-height: 0; display: grid; grid-template: minmax(0, 1fr) / 176px minmax(0, 1fr); }
.heads { background: var(--paper); border-right: 1px solid var(--line); }
.heads-bar { display: flex; align-items: center; gap: 8px; height: 34px; padding: 0 14px 1px; background: #fdf8ee; border-bottom: 1px solid var(--line); }
.track-head { height: 56px; padding: 2px 4px 0 7px; }
.track-head.selected { height: 53px; margin-bottom: 3px; padding-left: 4px; border-left: 3px solid var(--accent); background: #feeae1; }
.track-btns { display: flex; gap: 2px; height: 22px; border-bottom: 1px solid #e6dec399; }
.track-btns .grip { width: 16px; }
.lanes { display: flex; flex-direction: column; min-width: 0; min-height: 0; }
.lanes-row { flex: 1; min-height: 0; display: grid; grid-template: minmax(0, 1fr) / minmax(0, 1fr) 12px; background: #f6efe2; }
.lanes-main { position: relative; overflow: hidden; display: flex; flex-direction: column; background: #f1ead9; }
.cache { height: 12px; flex: none; background: #bbb8ab; border-bottom: 1px solid #d5cfbb; }
.ruler { height: 22px; flex: none; background: #c6c1b5; border-bottom: 1px solid var(--line); }
.ticks { display: grid; grid-template-columns: repeat(9, 1fr); width: 884px; height: 100%; }
.ticks span { padding-left: 6px; font: 11px/21px var(--mono); background:
  linear-gradient(#8d8e80, #8d8e80) 0 100% / 1px 8px no-repeat,
  linear-gradient(#a3a194, #a3a194) 25% 100% / 1px 4px no-repeat,
  linear-gradient(#a3a194, #a3a194) 50% 100% / 1px 4px no-repeat,
  linear-gradient(#a3a194, #a3a194) 75% 100% / 1px 4px no-repeat; }
.lane { height: 56px; flex: none; padding: 1px 0; border-bottom: 2px solid #eee6cf; }
.lane.last { flex: 1; height: auto; border-bottom: 0; }
.clip { width: 100px; height: 53px; margin-left: 180px; border: 1px solid #78a7d4; border-bottom: 0; border-radius: 3px 3px 0 0; background: #006e00; overflow: hidden; }
.clip span { display: block; height: 24px; padding: 0 8px; background: #78a7d4; color: var(--ink); font-size: 11px; line-height: 24px; }
.playhead { position: absolute; top: 12px; bottom: 0; left: 0; width: 1px; background: #f28a6b; box-shadow: 0 0 3px #f04e2366; }
.playhead::before { content: ""; position: absolute; top: 0; left: 0; width: 4px; height: 12px; border-radius: 0 0 3px 0; background: var(--accent); }
.vscroll { display: flex; flex-direction: column; gap: 11px; padding: 38px 2px 3px; }
.vtrack { flex: 1; display: flex; align-items: center; border-radius: 4px; background: #f1ead9; }
.vtrack span { width: 8px; height: 24px; border-radius: 4px; background: #969786; }
.vtrack:last-child { align-items: flex-start; padding-top: 4px; }
.hscroll { height: 20px; flex: none; padding: 4px 8px; background: #f6efe2; border-top: 1px solid var(--line); }
.htrack { height: 11px; border-radius: 5px; background: #f1ead9; }
.hthumb { width: 63%; height: 100%; display: flex; align-items: center; justify-content: space-between; padding: 0 3px; border-radius: 5px; background: #939584; }
.hthumb i { width: 6px; height: 6px; border-radius: 3px; background: #fff9ee; }
.hthumb b { width: 32px; height: 8px; border-radius: 4px; background: #a8a898; }

/* Meters */
.meters { background: var(--paper); display: flex; flex-direction: column; min-width: 0; border-left: 1px solid var(--line); }
.meters-head { flex: none; height: 34px; display: flex; align-items: center; justify-content: space-between; padding: 0 6px; border-bottom: 1px solid var(--line); background: #fdf8ee; }
.meters-head h2 { font: 10px/16px var(--mono); letter-spacing: 2px; }
.unit { margin: 12px 8px 13px; flex: 1; display: flex; flex-direction: column; align-items: center; padding: 12px 0 2px; border: 1px solid #8f8e89; border-radius: 6px; background: #b0aeaa; box-shadow: inset 0 0 3px #00000059; font: 9px/16px var(--mono); }
.unit h3 { font: 9px/14px var(--mono); letter-spacing: 2px; }
.unit-body { flex: 1; align-self: stretch; display: flex; justify-content: flex-end; gap: 3px; padding: 13px 8px 0 0; }
.scale { list-style: none; margin: 6px 9px 0 0; text-align: right; line-height: 9px; }
.scale .gap { margin-top: 10px; }
.bar { width: 14px; display: flex; flex-direction: column; align-items: center; }
.bar i { width: 14px; height: 94px; border: 1px solid #77766f; border-radius: 1px; background: linear-gradient(#fff, #fff) 0 100% / 100% 2px no-repeat, repeating-linear-gradient(#15171a 0 3px, #07090b 3px 4px); }
.bar span { margin-top: 5px; font-size: 7px; line-height: 10px; }
```
